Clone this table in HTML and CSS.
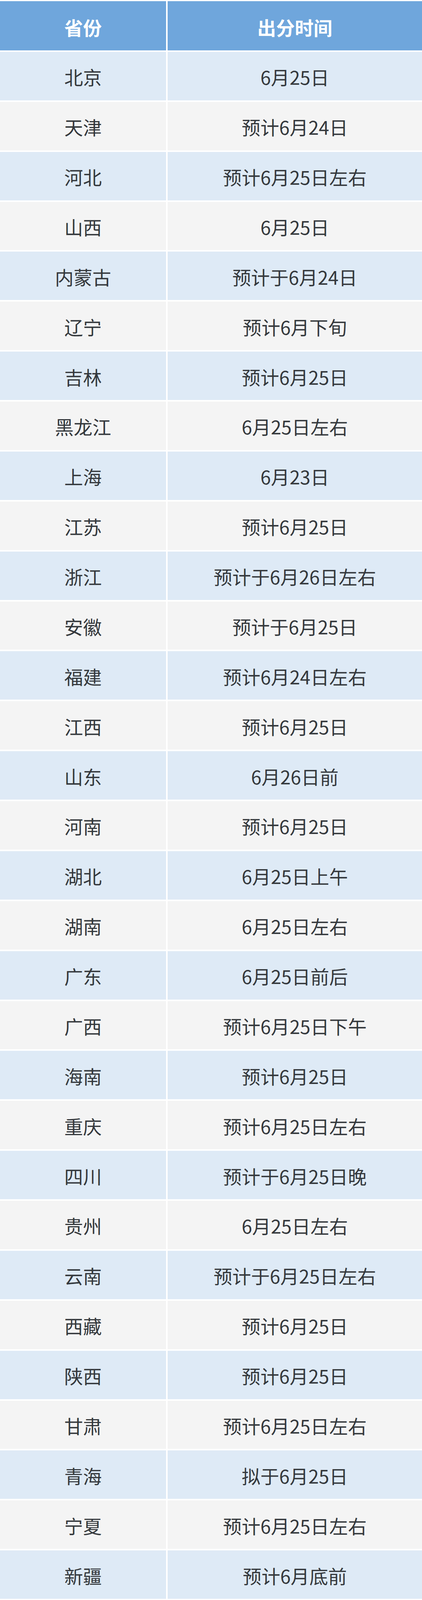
FILE: index.html
```html
<!DOCTYPE html>
<html lang="zh-CN">
<head>
<meta charset="utf-8">
<title>各省份出分时间</title>
<link rel="stylesheet" href="styles.css">
</head>
<body>
<div class="table">
  <div class="row head"><div class="cell">省份</div><div class="cell">出分时间</div></div>
  <div class="row blue"><div class="cell">北京</div><div class="cell">6月25日</div></div>
  <div class="row gray"><div class="cell">天津</div><div class="cell">预计6月24日</div></div>
  <div class="row blue"><div class="cell">河北</div><div class="cell">预计6月25日左右</div></div>
  <div class="row gray"><div class="cell">山西</div><div class="cell">6月25日</div></div>
  <div class="row blue"><div class="cell">内蒙古</div><div class="cell">预计于6月24日</div></div>
  <div class="row gray"><div class="cell">辽宁</div><div class="cell">预计6月下旬</div></div>
  <div class="row blue"><div class="cell">吉林</div><div class="cell">预计6月25日</div></div>
  <div class="row gray"><div class="cell">黑龙江</div><div class="cell">6月25日左右</div></div>
  <div class="row blue"><div class="cell">上海</div><div class="cell">6月23日</div></div>
  <div class="row gray"><div class="cell">江苏</div><div class="cell">预计6月25日</div></div>
  <div class="row blue"><div class="cell">浙江</div><div class="cell">预计于6月26日左右</div></div>
  <div class="row gray"><div class="cell">安徽</div><div class="cell">预计于6月25日</div></div>
  <div class="row blue"><div class="cell">福建</div><div class="cell">预计6月24日左右</div></div>
  <div class="row gray"><div class="cell">江西</div><div class="cell">预计6月25日</div></div>
  <div class="row blue"><div class="cell">山东</div><div class="cell">6月26日前</div></div>
  <div class="row gray"><div class="cell">河南</div><div class="cell">预计6月25日</div></div>
  <div class="row blue"><div class="cell">湖北</div><div class="cell">6月25日上午</div></div>
  <div class="row gray"><div class="cell">湖南</div><div class="cell">6月25日左右</div></div>
  <div class="row blue"><div class="cell">广东</div><div class="cell">6月25日前后</div></div>
  <div class="row gray"><div class="cell">广西</div><div class="cell">预计6月25日下午</div></div>
  <div class="row blue"><div class="cell">海南</div><div class="cell">预计6月25日</div></div>
  <div class="row gray"><div class="cell">重庆</div><div class="cell">预计6月25日左右</div></div>
  <div class="row blue"><div class="cell">四川</div><div class="cell">预计于6月25日晚</div></div>
  <div class="row gray"><div class="cell">贵州</div><div class="cell">6月25日左右</div></div>
  <div class="row blue"><div class="cell">云南</div><div class="cell">预计于6月25日左右</div></div>
  <div class="row gray"><div class="cell">西藏</div><div class="cell">预计6月25日</div></div>
  <div class="row blue"><div class="cell">陕西</div><div class="cell">预计6月25日</div></div>
  <div class="row gray"><div class="cell">甘肃</div><div class="cell">预计6月25日左右</div></div>
  <div class="row blue"><div class="cell">青海</div><div class="cell">拟于6月25日</div></div>
  <div class="row gray"><div class="cell">宁夏</div><div class="cell">预计6月25日左右</div></div>
  <div class="row blue"><div class="cell">新疆</div><div class="cell">预计6月底前</div></div>
</div>
</body>
</html>
```

FILE: styles.css
```css
html, body {
  margin: 0;
  padding: 0;
  background: #ffffff;
}

body {
  width: 1080px;
  font-family: "Noto Sans CJK SC", "Noto Sans", sans-serif;
  color: #34383c;
}

/* The table fills the window height; rows share it in the
   proportions of the original (header 141, body rows 138.75). */
.table {
  display: flex;
  flex-direction: column;
  gap: 4px;
  height: 100vh;
  padding: 3px 0 3px;
  box-sizing: border-box;
}

.row {
  display: grid;
  grid-template-columns: 425px 1fr;
  column-gap: 4px;
  flex: 138.75 1 0;
  min-height: 0;
}

.head {
  flex-grow: 141;
}

.cell {
  display: flex;
  align-items: center;
  justify-content: center;
  font-size: 48px;
  line-height: 1;
  padding-top: 3px;
  box-sizing: border-box;
  white-space: nowrap;
}

.head .cell {
  background: #6fa6dc;
  color: #ffffff;
  font-weight: 700;
  padding-top: 6px;
}

.blue .cell {
  background: #deeaf6;
}

.gray .cell {
  background: #f4f4f4;
}
```
